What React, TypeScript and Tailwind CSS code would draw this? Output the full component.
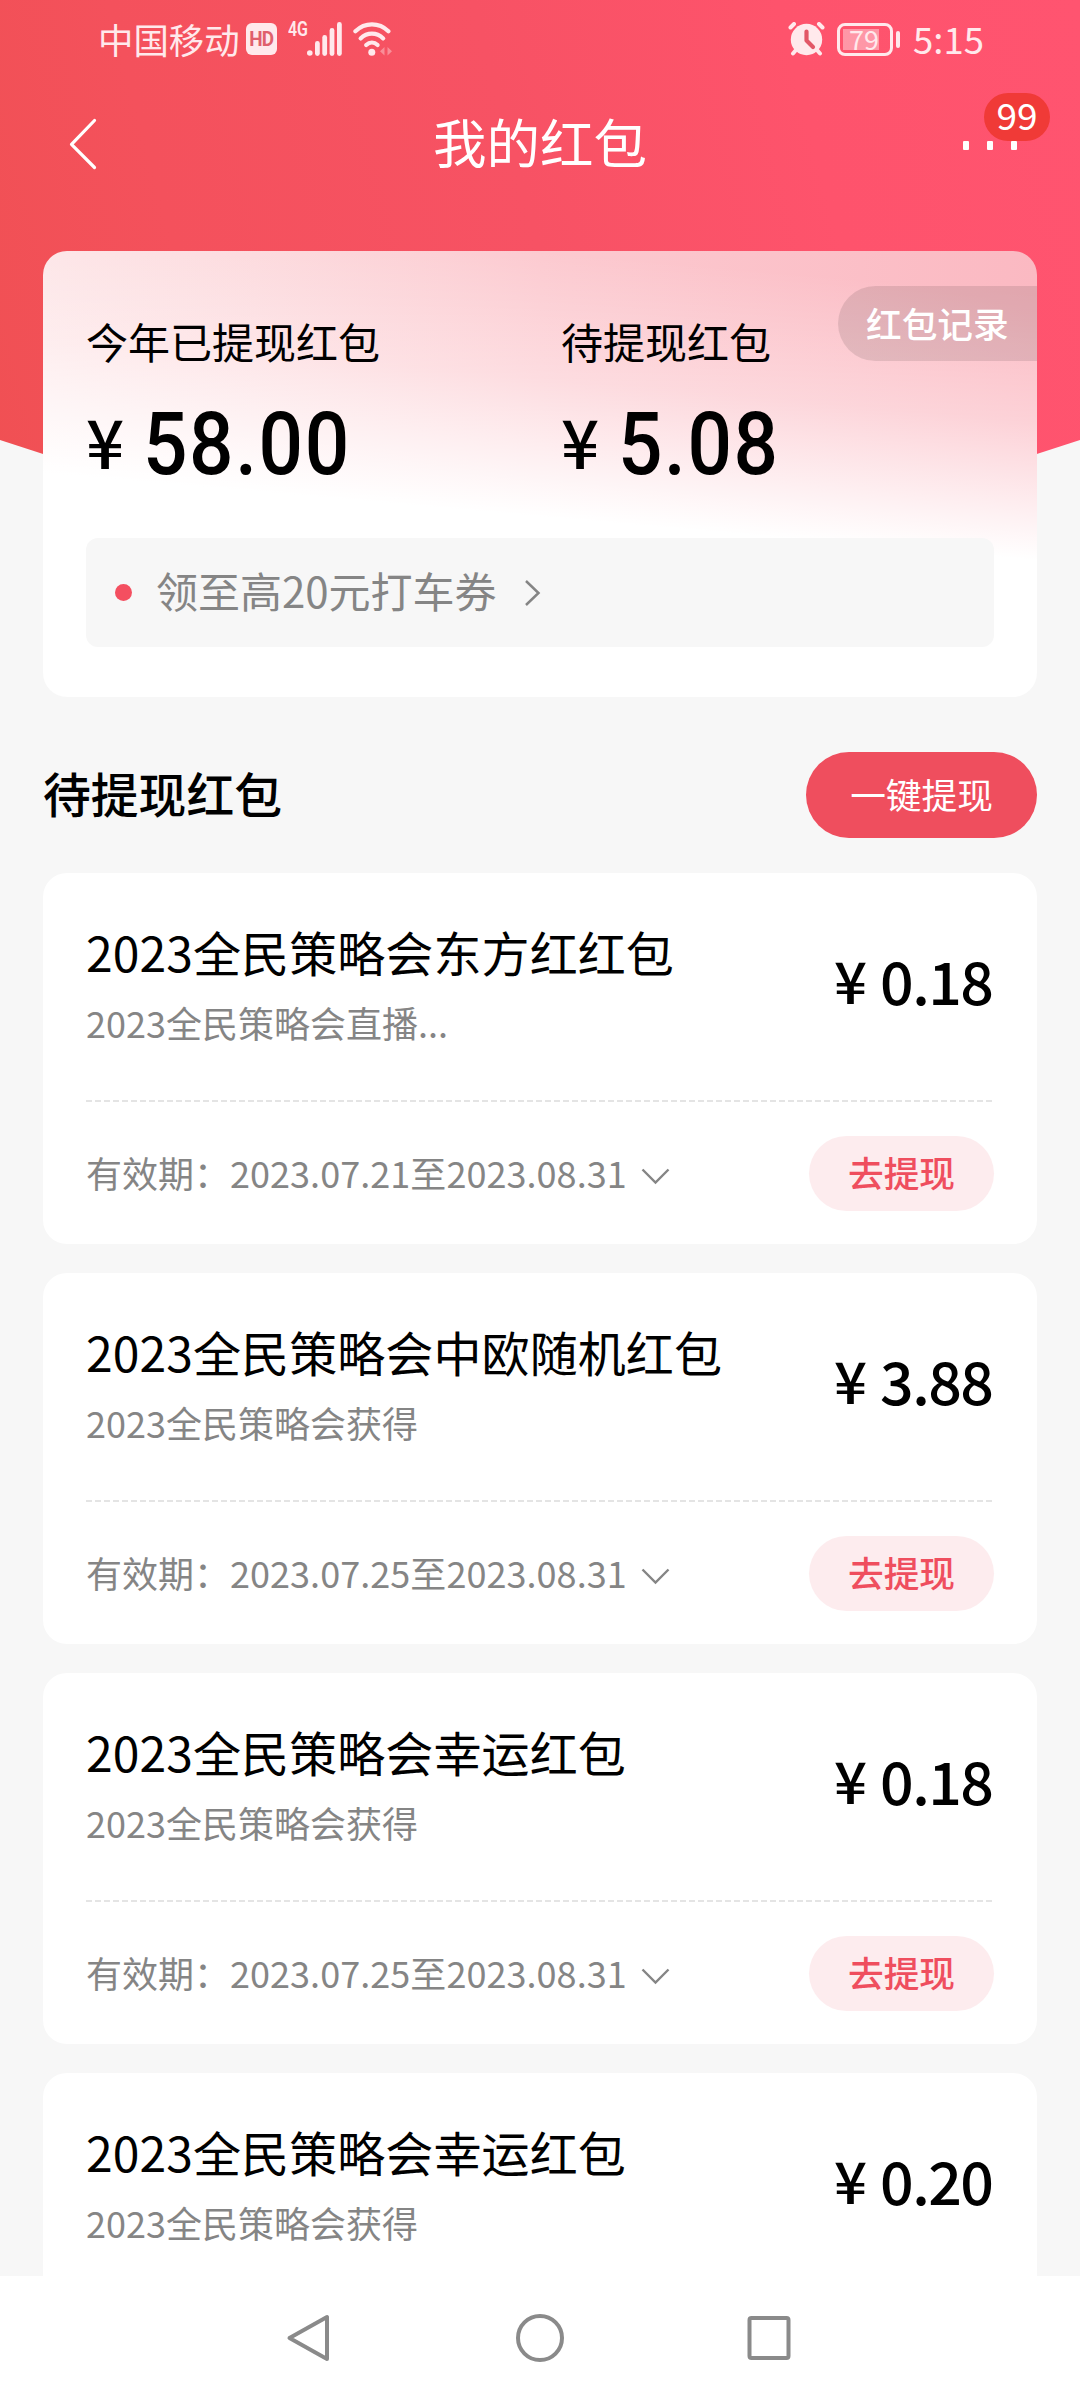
type Packet = { title: string; source: string; start: string; amount: string };

const packets: Packet[] = [
  { title: "2023全民策略会东方红红包", source: "2023全民策略会直播...", start: "2023.07.21", amount: "0.18" },
  { title: "2023全民策略会中欧随机红包", source: "2023全民策略会获得", start: "2023.07.25", amount: "3.88" },
  { title: "2023全民策略会幸运红包", source: "2023全民策略会获得", start: "2023.07.25", amount: "0.18" },
  { title: "2023全民策略会幸运红包", source: "2023全民策略会获得", start: "", amount: "0.20" },
];

function StatusBar() {
  return (
    <div className="flex h-[78px] items-center justify-between pr-[96px] pl-[98px] text-[#ffe9ec]">
      <div className="flex items-center">
        <span className="text-[35.4px] leading-[78px]">中国移动</span>
        <span className="ml-[6px] flex h-[32px] w-[31px] items-center justify-center rounded-[6px] bg-[#ffe9ec] font-['Roboto'] text-[21px] leading-none font-bold tracking-[-1px] text-[#e0606c]">
          <span className="inline-block scale-x-90">HD</span>
        </span>
        <span className="ml-[11px] -mt-[19px] inline-block w-[19px] origin-left scale-x-[0.76] font-['Roboto'] text-[21px] leading-none font-semibold">4G</span>
        <svg className="h-[34px] w-[36px]" viewBox="0 0 36 34" fill="currentColor">
          <circle cx="2.8" cy="31" r="2.8" />
          <rect x="8" y="19" width="4.8" height="15" rx="2.4" />
          <rect x="15.3" y="13" width="4.8" height="21" rx="2.4" />
          <rect x="22.6" y="6" width="4.8" height="28" rx="2.4" />
          <rect x="30" y="0" width="4.8" height="34" rx="2.4" />
        </svg>
        <svg className="ml-[10px] h-[34px] w-[40px]" viewBox="0 0 40 34" fill="none" stroke="currentColor" strokeWidth="4.2" strokeLinecap="round">
          <path d="M2.4 9.2C12 0 26 0 35.4 9.2" />
          <path d="M7.6 16.4c6.6-6.4 16-6.4 22.6 0" />
          <path d="M13.2 23c3.4-3.2 8-3.2 11.4 0" />
          <circle cx="18.8" cy="30.2" r="3.5" fill="currentColor" stroke="none" />
          <path d="M31.5 25v8.5L27 29.2ZM34.5 25v8.5l4.5-4.3Z" fill="currentColor" stroke="none" opacity=".4" />
        </svg>
      </div>
      <div className="flex items-center">
        <svg className="h-[34px] w-[37px]" viewBox="0 0 37 34">
          <g stroke="currentColor" strokeWidth="4" strokeLinecap="round">
            <path d="M2.500 5.500 6 2M34.500 5.500 31 2M8 28l-3 3.500M29 28l3 3.500" />
          </g>
          <circle cx="18.500" cy="17.500" r="15.700" fill="currentColor" />
          <path d="M18.500 9.500v9l6.500 6.500" fill="none" stroke="#e25767" strokeWidth="4.200" strokeLinecap="round" strokeLinejoin="round" />
        </svg>
        <div className="ml-[12px] flex h-[33px] w-[56px] items-center rounded-[8px] border-3 border-current px-[3px]">
          <span className="flex h-[21px] w-[36px] items-center bg-white/40 pl-[6px] text-[27px] leading-none">
            <span className="inline-block -translate-y-px">79</span>
          </span>
        </div>
        <span className="ml-[3px] h-[17px] w-[4px] rounded-full bg-current" />
        <span className="ml-[13px] text-[36.500px] leading-[78px]">5:15</span>
      </div>
    </div>
  );
}

function TitleBar() {
  return (
    <div className="flex h-[173px] items-start justify-between pr-[63px] pl-[69px]">
      <svg className="mt-[40px] h-[52px] w-[28px]" viewBox="0 0 28 52" fill="none" stroke="white" strokeWidth="3.2" strokeLinecap="round" strokeLinejoin="round">
        <path d="M25.500 2.500 2.500 26.300 25.500 49.500" />
      </svg>
      <h1 className="mt-[23px] ml-[20px] text-[53.500px] leading-[80px] font-normal text-white">我的红包</h1>
      <div className="relative mt-[63px] flex gap-[18px]">
        <span className="h-[9px] w-[6px] rounded-[1px] bg-white" />
        <span className="h-[9px] w-[6px] rounded-[1px] bg-white" />
        <span className="h-[9px] w-[6px] rounded-[1px] bg-white" />
        <span className="absolute bottom-[9px] left-[21px] flex h-[48px] w-[66px] items-center justify-center rounded-full bg-[#f03a37] text-[37px] leading-none text-white">
          <span className="-translate-y-[3px]">99</span>
        </span>
      </div>
    </div>
  );
}

function Total({ label, amount }: { label: string; amount: string }) {
  return (
    <div>
      <div className="text-[42px] leading-[60px]">{label}</div>
      <div className="mt-[28px] flex h-[90px] items-baseline">
        <span className="w-[57px] -translate-y-[5px] text-[67px] leading-[90px] font-medium">¥</span>
        <span className="origin-left scale-x-[0.900] font-['Roboto'] text-[87px] leading-[90px] font-medium tracking-[1.800px]">{amount}</span>
      </div>
    </div>
  );
}

function Summary() {
  return (
    <section className="relative h-[446px] shrink-0 rounded-[24px] bg-[linear-gradient(185deg,rgba(255,255,255,0)_8%,rgba(255,255,255,0.35)_32%,#fff_58%),linear-gradient(to_right,#fde3e5,#fccad0_50%,#fbb9c2)] px-[43px] pt-[60px]">
      <div className="flex">
        <div className="w-[475px]">
          <Total label="今年已提现红包" amount="58.00" />
        </div>
        <Total label="待提现红包" amount="5.08" />
      </div>
      <div className="absolute top-[35px] right-0 flex h-[75px] w-[199px] items-center rounded-l-full bg-black/10 pl-[28px] text-[35.700px] leading-none font-medium text-white">
        <span className="-translate-y-px">红包记录</span>
      </div>
      <div className="mt-[49px] flex h-[109px] items-center rounded-[12px] bg-[#f7f7f7] pl-[29px] text-[#858585]">
        <span className="size-[17px] rounded-full bg-[#f44f60]" />
        <span className="-mt-[5px] ml-[24px] text-[42px] leading-[60px]">领至高20元打车券</span>
        <svg className="ml-[27px] h-[28px] w-[18px]" viewBox="0 0 18 28" fill="none" stroke="currentColor" strokeWidth="2.500">
          <path d="M2 2l12.500 12L2 26" />
        </svg>
      </div>
    </section>
  );
}

function PacketCard({ packet }: { packet: Packet }) {
  return (
    <article className="h-[371px] shrink-0 rounded-[24px] bg-white px-[43px] pt-[43px]">
      <div className="flex h-[184px] justify-between">
        <div>
          <h3 className="text-[48px] leading-[70px] font-normal tracking-[0.100px]">{packet.title}</h3>
          <p className="mt-[10px] text-[36px] leading-[52px] text-[#858585]">{packet.source}</p>
        </div>
        <div className="flex items-baseline font-medium">
          <span className="mr-[13px] -translate-y-px text-[58px] leading-[128px]">¥</span>
          <span className="mr-[1.500px] text-[59px] leading-[128px] tracking-[-1.500px]">{packet.amount}</span>
        </div>
      </div>
      <div className="h-[2px] bg-[repeating-linear-gradient(to_right,#e4e4e4_0_6px,transparent_6px_9px)]" />
      {packet.start && (
        <div className="flex h-[142px] items-center justify-between">
          <div className="-mt-[3px] flex items-center text-[36px] leading-[52px] text-[#858585]">
            <span className="w-[144px]">有效期：</span>
            <span className="tracking-[0.050px]">{packet.start}至2023.08.31</span>
            <svg className="mt-[10px] ml-[14px] h-[17px] w-[29px]" viewBox="0 0 29 17" fill="none" stroke="currentColor" strokeWidth="2.400">
              <path d="M1.500 1.500l13 13 13-13" />
            </svg>
          </div>
          <button className="h-[75px] w-[185px] rounded-full bg-[#fdecee] pb-[2px] text-[35.700px] leading-none font-medium text-[#ef4e5e]">去提现</button>
        </div>
      )}
    </article>
  );
}

function NavBar() {
  return (
    <nav className="relative flex h-[124px] shrink-0 items-center justify-center gap-[179px] bg-white text-[#8a8a8a]">
      <svg className="size-[50px]" viewBox="0 0 50 50" fill="none" stroke="currentColor" strokeWidth="4" strokeLinejoin="round">
        <path d="M41 4v42L3.500 25Z" />
      </svg>
      <svg className="size-[50px]" viewBox="0 0 50 50" fill="none" stroke="currentColor" strokeWidth="4">
        <circle cx="25" cy="25" r="22" />
      </svg>
      <svg className="size-[50px]" viewBox="0 0 50 50" fill="none" stroke="currentColor" strokeWidth="4">
        <rect x="5.500" y="5" width="39" height="40" rx="2" />
      </svg>
    </nav>
  );
}

export default function App() {
  return (
    <div className="relative flex h-[2400px] w-[1080px] flex-col overflow-hidden bg-[#f7f7f7] font-['Noto_Sans_CJK_SC',sans-serif] text-black">
      <div className="absolute inset-x-0 top-0 h-[500px] bg-[linear-gradient(75deg,#f05053_0%,#f4515c_20%,#f75264_50%,#fe536c_75%,#ff5470_100%)] [clip-path:polygon(0_0,100%_0,100%_440px,1000px_466px,80px_466px,0_440px)]" />
      <header className="relative">
        <StatusBar />
        <TitleBar />
      </header>
      <main className="relative flex min-h-0 flex-1 flex-col overflow-hidden px-[43px]">
        <Summary />
        <div className="mt-[55px] flex h-[86px] shrink-0 items-center justify-between">
          <h2 className="-mt-[4px] text-[47.800px] leading-[70px] font-medium">待提现红包</h2>
          <button className="h-[86px] w-[231px] rounded-full bg-[#ef4e5e] pb-[3px] text-[35.700px] leading-none text-white">一键提现</button>
        </div>
        <div className="mt-[35px] flex flex-col gap-[29px]">
          {packets.map((packet, i) => (
            <PacketCard key={i} packet={packet} />
          ))}
        </div>
      </main>
      <NavBar />
    </div>
  );
}
